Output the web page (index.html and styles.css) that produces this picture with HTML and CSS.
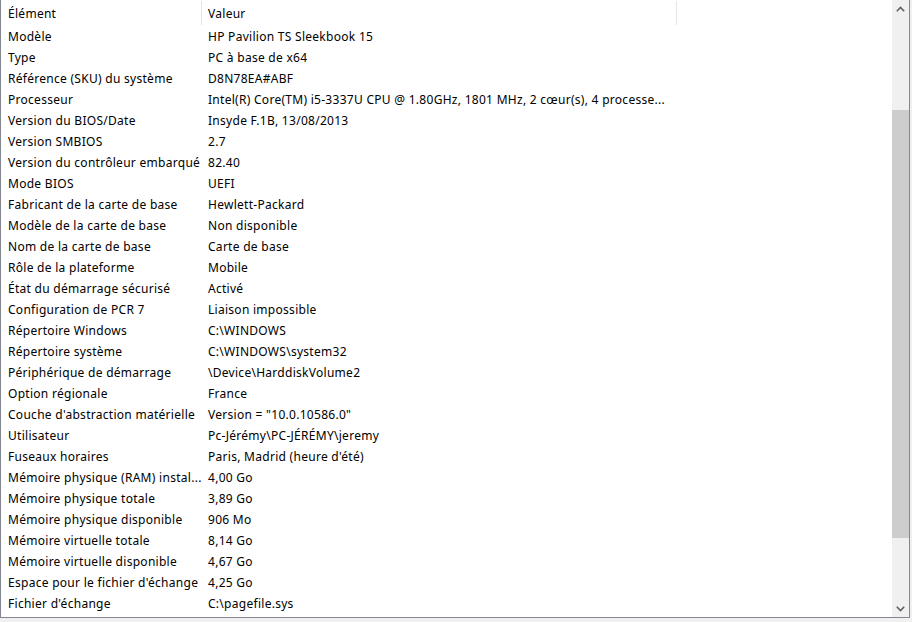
FILE: index.html
```html
<!DOCTYPE html>
<html lang="fr">
<head>
    <meta charset="UTF-8">
    <title>Informations système</title>
    <link rel="stylesheet" href="styles.css">
</head>
<body>
    <div class="listview">
        <div class="list-area">
            <div class="header">
                <div class="hcell col-name">Élément</div>
                <div class="hcell col-value">Valeur</div>
                <div class="hcell col-rest"></div>
            </div>
            <div class="rows">
                <div class="row"><div class="cell col-name">Modèle</div><div class="cell col-value">HP Pavilion TS Sleekbook 15</div></div>
                <div class="row"><div class="cell col-name">Type</div><div class="cell col-value">PC à base de x64</div></div>
                <div class="row"><div class="cell col-name">Référence (SKU) du système</div><div class="cell col-value">D8N78EA#ABF</div></div>
                <div class="row"><div class="cell col-name">Processeur</div><div class="cell col-value">Intel(R) Core(TM) i5-3337U CPU @ 1.80GHz, 1801 MHz, 2 cœur(s), 4 processe...</div></div>
                <div class="row"><div class="cell col-name">Version du BIOS/Date</div><div class="cell col-value">Insyde F.1B, 13/08/2013</div></div>
                <div class="row"><div class="cell col-name">Version SMBIOS</div><div class="cell col-value">2.7</div></div>
                <div class="row"><div class="cell col-name">Version du contrôleur embarqué</div><div class="cell col-value">82.40</div></div>
                <div class="row"><div class="cell col-name">Mode BIOS</div><div class="cell col-value">UEFI</div></div>
                <div class="row"><div class="cell col-name">Fabricant de la carte de base</div><div class="cell col-value">Hewlett-Packard</div></div>
                <div class="row"><div class="cell col-name">Modèle de la carte de base</div><div class="cell col-value">Non disponible</div></div>
                <div class="row"><div class="cell col-name">Nom de la carte de base</div><div class="cell col-value">Carte de base</div></div>
                <div class="row"><div class="cell col-name">Rôle de la plateforme</div><div class="cell col-value">Mobile</div></div>
                <div class="row"><div class="cell col-name">État du démarrage sécurisé</div><div class="cell col-value">Activé</div></div>
                <div class="row"><div class="cell col-name">Configuration de PCR 7</div><div class="cell col-value">Liaison impossible</div></div>
                <div class="row"><div class="cell col-name">Répertoire Windows</div><div class="cell col-value">C:\WINDOWS</div></div>
                <div class="row"><div class="cell col-name">Répertoire système</div><div class="cell col-value">C:\WINDOWS\system32</div></div>
                <div class="row"><div class="cell col-name">Périphérique de démarrage</div><div class="cell col-value">\Device\HarddiskVolume2</div></div>
                <div class="row"><div class="cell col-name">Option régionale</div><div class="cell col-value">France</div></div>
                <div class="row"><div class="cell col-name">Couche d'abstraction matérielle</div><div class="cell col-value">Version = "10.0.10586.0"</div></div>
                <div class="row"><div class="cell col-name">Utilisateur</div><div class="cell col-value">Pc-Jérémy\PC-JÉRÉMY\jeremy</div></div>
                <div class="row"><div class="cell col-name">Fuseaux horaires</div><div class="cell col-value">Paris, Madrid (heure d'été)</div></div>
                <div class="row"><div class="cell col-name">Mémoire physique (RAM) instal...</div><div class="cell col-value">4,00 Go</div></div>
                <div class="row"><div class="cell col-name">Mémoire physique totale</div><div class="cell col-value">3,89 Go</div></div>
                <div class="row"><div class="cell col-name">Mémoire physique disponible</div><div class="cell col-value">906 Mo</div></div>
                <div class="row"><div class="cell col-name">Mémoire virtuelle totale</div><div class="cell col-value">8,14 Go</div></div>
                <div class="row"><div class="cell col-name">Mémoire virtuelle disponible</div><div class="cell col-value">4,67 Go</div></div>
                <div class="row"><div class="cell col-name">Espace pour le fichier d'échange</div><div class="cell col-value">4,25 Go</div></div>
                <div class="row"><div class="cell col-name">Fichier d'échange</div><div class="cell col-value">C:\pagefile.sys</div></div>
            </div>
        </div>
        <div class="scrollbar">
            <div class="arrow">
                <svg width="9" height="6" viewBox="0 0 9 6"><path d="M0.8 5.2 L4.5 1.5 L8.2 5.2" fill="none" stroke="#606060" stroke-width="1.6"/></svg>
            </div>
            <div class="track">
                <div class="thumb"></div>
            </div>
            <div class="arrow">
                <svg width="9" height="6" viewBox="0 0 9 6"><path d="M0.8 0.8 L4.5 4.5 L8.2 0.8" fill="none" stroke="#606060" stroke-width="1.6"/></svg>
            </div>
        </div>
    </div>
</body>
</html>
```
FILE: styles.css
```css
body {
    margin: 0;
    background-color: #f0f0f0;
    font-family: "Noto Sans", "Open Sans", sans-serif;
    font-size: 12px;
    letter-spacing: 0.28px;
    color: #000;
}

.listview {
    display: flex;
    width: 908px;
    height: 617px;
    background-color: #fff;
    border-left: 1px solid #828790;
    border-right: 1px solid #828790;
    border-bottom: 1px solid #828790;
}

.list-area {
    flex: 1;
    overflow: hidden;
}

.header {
    display: flex;
    height: 26px;
}

.hcell {
    box-sizing: border-box;
    height: 24px;
    margin-top: 1px;
    line-height: 25px;
    border-right: 1px solid #e5e5e5;
    white-space: nowrap;
}

.col-name {
    width: 201px;
    padding-left: 7px;
    box-sizing: border-box;
}

.col-value {
    width: 475px;
    padding-left: 6px;
    box-sizing: border-box;
}

.col-rest {
    border-right: none;
    flex: 1;
}

.row {
    display: flex;
    height: 21px;
    line-height: 21px;
}

.cell {
    white-space: nowrap;
    overflow: hidden;
    text-overflow: ellipsis;
}

.scrollbar {
    width: 17px;
    display: flex;
    flex-direction: column;
    background-color: #f0f0f0;
}

.arrow {
    height: 17px;
    display: flex;
    align-items: center;
    justify-content: center;
}

.track {
    flex: 1;
    padding-top: 93px;
}

.thumb {
    height: 428px;
    background-color: #cdcdcd;
}
```
